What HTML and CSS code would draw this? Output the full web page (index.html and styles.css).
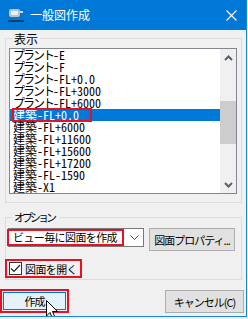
FILE: index.html
```html
<!DOCTYPE html>
<html lang="ja">
<head>
    <meta charset="UTF-8">
    <meta name="viewport" content="width=device-width, initial-scale=1.0">
    <title>一般図作成</title>
    <link rel="stylesheet" href="styles.css">
</head>
<body>
    <div class="dialog">
        <div class="title-bar">
            <svg class="app-icon" width="17" height="15" viewBox="0 0 17 15">
                <rect x="1" y="1" width="11" height="8" rx="2" fill="#b9c2cc"/>
                <rect x="3" y="3" width="7" height="4" fill="#e8edf2"/>
                <rect x="12" y="3" width="3" height="2" fill="#d0d6dc"/>
                <rect x="0" y="12" width="16" height="2" fill="#1b3f66"/>
            </svg>
            <span class="title">一般図作成</span>
            <svg class="close" width="11" height="11" viewBox="0 0 11 11">
                <path d="M0.5 0.5 L10.5 10.5 M10.5 0.5 L0.5 10.5" stroke="#fff" stroke-width="1.1"/>
            </svg>
        </div>

        <fieldset class="group group-view">
            <legend>表示</legend>
            <div class="listbox">
                <ul class="items">
                    <li><span class="k">プラント</span><span class="h">-E</span></li>
                    <li><span class="k">プラント</span><span class="h">-F</span></li>
                    <li><span class="k">プラント</span><span class="h">-FL+0.0</span></li>
                    <li><span class="k">プラント</span><span class="h">-FL+3000</span></li>
                    <li><span class="k">プラント</span><span class="h">-FL+6000</span></li>
                    <li class="selected"><span class="mark">建築<span class="h">-FL+0.0</span></span></li>
                    <li>建築<span class="h">-FL+6000</span></li>
                    <li>建築<span class="h">-FL+11600</span></li>
                    <li>建築<span class="h">-FL+15600</span></li>
                    <li>建築<span class="h">-FL+17200</span></li>
                    <li>建築<span class="h">-FL-1590</span></li>
                    <li>建築<span class="h">-X1</span></li>
                </ul>
                <div class="scrollbar">
                    <div class="arrow">
                        <svg width="9" height="6" viewBox="0 0 9 6"><path d="M1 5 L4.5 1.5 L8 5" fill="none" stroke="#606060" stroke-width="2"/></svg>
                    </div>
                    <div class="track"><div class="thumb"></div></div>
                    <div class="arrow">
                        <svg width="9" height="6" viewBox="0 0 9 6"><path d="M1 1 L4.5 4.5 L8 1" fill="none" stroke="#606060" stroke-width="2"/></svg>
                    </div>
                </div>
            </div>
        </fieldset>

        <fieldset class="group group-options">
            <legend class="legend-kana">オプション</legend>
            <div class="option-row">
                <div class="combo">
                    <span class="combo-value">ビュー毎に図面を作成</span>
                    <svg class="combo-arrow" width="9" height="5" viewBox="0 0 9 5"><path d="M0.5 0.5 L4.5 4.5 L8.5 0.5" fill="none" stroke="#444" stroke-width="1"/></svg>
                </div>
                <button class="btn btn-props">図面プロパティ...</button>
            </div>
            <label class="check">
                <span class="check-box">
                    <svg width="11" height="11" viewBox="0 0 11 11"><path d="M1 5.5 L4 8.5 L10 2" fill="none" stroke="#222" stroke-width="1.2"/></svg>
                </span>
                <span class="check-text">図面を開く</span>
            </label>
        </fieldset>

        <div class="actions">
            <div class="ok-mark"><button class="btn btn-default">作成</button></div>
            <button class="btn btn-cancel">キャンセル(C)</button>
        </div>

        <svg class="cursor" width="13" height="20" viewBox="0 0 13 20">
            <path d="M0.5 0.5 L0.5 16 L4 12.5 L6.5 18.5 L9 17.5 L6.5 11.5 L11.5 11.5 Z" fill="#fff" stroke="#000" stroke-width="1"/>
        </svg>
    </div>
</body>
</html>
```

FILE: styles.css
```css
body {
    margin: 0;
    background-color: #f0f0f0;
    font-family: "Noto Sans CJK JP", sans-serif;
    font-size: 12px;
    color: #000;
}

.dialog {
    position: relative;
    width: 247px;
    height: 317px;
    box-sizing: border-box;
    border-right: 1px solid #1883d7;
    border-bottom: 1px solid #1883d7;
    overflow: hidden;
}

.title-bar {
    height: 30px;
    background-color: #0078d7;
    display: flex;
    align-items: center;
    color: #fff;
}

.app-icon {
    margin-left: 8px;
    margin-top: 1px;
}

.title {
    margin-left: 5px;
    font-size: 12px;
    line-height: 16px;
}

.close {
    margin-left: auto;
    margin-right: 9px;
}

.group {
    margin: 2px 0 0 5px;
    width: 237px;
    box-sizing: border-box;
    border: 1px solid #dcdcdc;
    padding: 0 4px 8px 3px;
    min-width: 0;
}

.group legend {
    margin-left: 3px;
    padding: 0 2px;
    font-size: 12px;
    line-height: 13px;
}

.group .legend-kana {
    font-size: 11px;
    letter-spacing: -3px;
    padding-right: 5px;
}

.listbox {
    margin-top: 3px;
    height: 146px;
    box-sizing: border-box;
    border: 1px solid #828790;
    background-color: #fff;
    display: flex;
}

.items {
    list-style: none;
    margin: 0;
    padding: 0;
    flex: 1;
    font-size: 12px;
    line-height: 12px;
}

.items li {
    height: 12px;
    padding-left: 3px;
    white-space: nowrap;
}

.items .h {
    font-feature-settings: "hwid";
}

.items .k {
    letter-spacing: -2px;
}

.items .selected {
    background-color: #0078d7;
    color: #fff;
}

.mark {
    display: inline-block;
    height: 12px;
    outline: 2px solid #e81123;
    outline-offset: -1px;
    padding-right: 12px;
}

.scrollbar {
    width: 16px;
    background-color: #f0f0f0;
    display: flex;
    flex-direction: column;
}

.arrow {
    height: 17px;
    display: flex;
    align-items: center;
    justify-content: center;
}

.track {
    flex: 1;
}

.thumb {
    margin-top: 35px;
    height: 43px;
    background-color: #cdcdcd;
}

.group-options {
    margin-top: 8px;
    padding-bottom: 1px;
}

.option-row {
    margin-top: 4px;
    display: flex;
    align-items: flex-start;
}

.combo {
    margin-left: -1px;
    width: 136px;
    height: 19px;
    box-sizing: border-box;
    border: 1px solid #7a7a7a;
    background-color: #fff;
    display: flex;
    align-items: center;
}

.combo-value {
    margin-left: -2px;
    width: 117px;
    height: 17px;
    box-sizing: border-box;
    border: 2px solid #e81123;
    padding-left: 4px;
    font-size: 11px;
    line-height: 13px;
    letter-spacing: -0.6px;
    white-space: nowrap;
    overflow: hidden;
}

.combo-arrow {
    margin-left: auto;
    margin-right: 4px;
}

.btn {
    font-family: inherit;
    font-size: 11px;
    color: #000;
    background-color: #e1e1e1;
    border: 1px solid #adadad;
    padding: 0;
    white-space: nowrap;
}

.btn-props {
    margin-left: 5px;
    width: 86px;
    height: 23px;
    letter-spacing: -1px;
}

.check {
    margin: 8px 0 0 -4px;
    width: 77px;
    height: 19px;
    box-sizing: border-box;
    border: 2px solid #e81123;
    padding-left: 2px;
    display: flex;
    align-items: center;
    white-space: nowrap;
}

.check-box {
    width: 13px;
    height: 13px;
    box-sizing: border-box;
    border: 1px solid #333;
    background-color: #fff;
    display: flex;
    margin-right: 3px;
    flex-shrink: 0;
}

.check-text {
    font-size: 11px;
    letter-spacing: -0.6px;
}

.actions {
    margin-top: 9px;
    display: flex;
    justify-content: space-between;
    align-items: flex-start;
}

.ok-mark {
    width: 69px;
    height: 24px;
    box-sizing: border-box;
    border: 2px solid #e81123;
    padding: 1px;
    display: flex;
}

.btn-default {
    flex: 1;
    border-color: #0078d7;
    background-color: #e5f1fb;
    letter-spacing: -1px;
}

.btn-cancel {
    margin-top: 1px;
    margin-right: 2px;
    width: 79px;
    height: 23px;
    letter-spacing: -1px;
}

.cursor {
    position: absolute;
    left: 46px;
    top: 300px;
}
```
